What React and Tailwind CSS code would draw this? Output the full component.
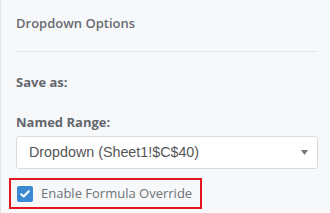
export default function App() {
    return (
        <div className="w-[330px] h-[213px] overflow-hidden bg-[#f7f8fa] border-l border-[#e3e5e8] font-['Open_Sans',sans-serif]">
            <div className="pl-[15px] pr-[12px] pt-[13px]">
                {/* Header */}
                <h2 className="text-[13px] leading-[20px] font-semibold text-[#686c72]">Dropdown Options</h2>
                <div className="mt-[18px] h-px bg-[#e6e8eb]"></div>

                <div className="mt-[20px] text-[13px] leading-[20px] font-bold text-[#63676d]">Save as:</div>

                <div className="mt-[20px] text-[13px] leading-[20px] font-bold text-[#63676d]">Named Range:</div>

                {/* Select */}
                <div className="mt-[4px] h-[33px] bg-white border border-[#d9dce0] rounded-[3px] flex items-center justify-between pl-[12px] pr-[9px]">
                    <span className="font-['Liberation_Sans',sans-serif] text-[14.3px] text-[#555]">Dropdown (Sheet1!$C$40)</span>
                    <svg width="7" height="5" viewBox="0 0 7 5">
                        <path d="M0 0h7L3.5 5z" fill="#777" />
                    </svg>
                </div>

                {/* Checkbox row */}
                <div className="mt-[9px] -ml-[7px] w-[193px] h-[31px] border-2 border-[#e3161f] flex items-center pl-[6px] gap-[8px]">
                    <div className="w-[16px] h-[16px] rounded-[2px] bg-[#3b89d3] flex items-center justify-center">
                        <svg width="10" height="8" viewBox="0 0 10 8">
                            <path d="M1.2 4.2l2.5 2.3L8.8 1.3" fill="none" stroke="white" strokeWidth="2" strokeLinecap="round" strokeLinejoin="round" />
                        </svg>
                    </div>
                    <span className="text-[13px] text-[#6e7276]">Enable Formula Override</span>
                </div>
            </div>
        </div>
    );
}
